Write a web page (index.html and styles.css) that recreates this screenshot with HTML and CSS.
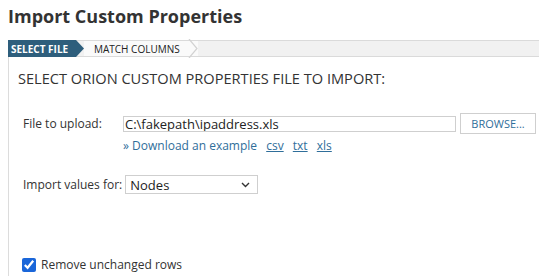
FILE: index.html
```html
<!DOCTYPE html>
<html lang="en">
<head>
    <meta charset="UTF-8">
    <meta name="viewport" content="width=device-width, initial-scale=1.0">
    <title>Import Custom Properties</title>
    <link rel="stylesheet" href="styles.css">
</head>
<body>
    <h1 class="page-title">Import Custom Properties</h1>

    <div class="steps">
        <div class="step step-active">SELECT FILE</div>
        <div class="step">
            MATCH COLUMNS
            <svg class="step-arrow" width="10" height="19" viewBox="0 0 10 19">
                <polyline points="1,0 9,9.5 1,19" fill="none" stroke="#d2d2d2" stroke-width="1.2"/>
            </svg>
        </div>
    </div>

    <div class="panel">
        <h2 class="panel-title">SELECT ORION CUSTOM PROPERTIES FILE TO IMPORT:</h2>

        <div class="form-row file-row">
            <label class="form-label">File to upload:</label>
            <div class="file-field">
                <div class="file-line">
                    <input class="file-input" type="text" value="C:\fakepath\ipaddress.xls">
                    <button class="browse-btn">BROWSE...</button>
                </div>
                <p class="examples">
                    &raquo; Download an example
                    <a href="#">csv</a>
                    <a href="#">txt</a>
                    <a href="#">xls</a>
                </p>
            </div>
        </div>

        <div class="form-row values-row">
            <label class="form-label-inline">Import values for:</label>
            <div class="select-box">
                <span>Nodes</span>
                <svg width="9" height="6" viewBox="0 0 9 6">
                    <polyline points="1,1 4.5,4.5 8,1" fill="none" stroke="#333" stroke-width="1.4"/>
                </svg>
            </div>
        </div>

        <label class="check-row">
            <input type="checkbox" checked>
            Remove unchanged rows
        </label>
    </div>
</body>
</html>
```

FILE: styles.css
```css
*{
    margin: 0;
    padding: 0;
    box-sizing: border-box;
}
body{
    font-family: "Open Sans", Arial, sans-serif;
    color: #333;
    background-color: white;
    padding: 0 0 0 8px;
    overflow: hidden;
}
.page-title{
    font-size: 18px;
    font-weight: bold;
    line-height: 25px;
    margin-top: 4px;
    color: #333;
}
.steps{
    display: flex;
    height: 17px;
    margin-top: 11px;
    background-color: #f1f1f1;
    border-top: 1px solid #dadada;
    border-bottom: 1px solid #dadada;
}
.step{
    display: flex;
    align-items: center;
    font-size: 10px;
    height: 15px;
    background-color: #fafafa;
    padding-left: 10px;
    color: #222;
}
.step-active{
    background-color: #2e5e7c;
    color: white;
    font-weight: bold;
    width: 76px;
    height: 17px;
    margin-top: -1px;
    padding-left: 3px;
    clip-path: polygon(0 0, 68px 0, 76px 50%, 68px 100%, 0 100%);
}
.step-arrow{
    margin-left: 8px;
    margin-top: -2px;
    margin-bottom: -2px;
}
.panel{
    border-left: 1px solid #dcdcdc;
    padding-left: 9px;
    height: 220px;
}
.panel-title{
    font-size: 14.6px;
    font-weight: normal;
    line-height: 20px;
    padding-top: 11px;
    color: #333;
}
.form-row{
    display: flex;
    margin-left: 5px;
    font-size: 12px;
}
.file-row{
    margin-top: 25px;
}
.form-label{
    width: 100px;
    line-height: 20px;
    padding-top: 1px;
}
.file-line{
    display: flex;
    align-items: center;
}
.file-input{
    width: 333px;
    height: 16px;
    border: 1px solid #cfcfcf;
    font-family: "Open Sans", Arial, sans-serif;
    font-size: 13px;
    color: #222;
    padding-left: 1px;
    outline: none;
}
.browse-btn{
    margin-left: 4px;
    width: 76px;
    height: 21px;
    background-color: white;
    border: 1px solid #cfcfcf;
    font-family: "Open Sans", Arial, sans-serif;
    font-size: 11px;
    color: #2f6e9a;
}
.examples{
    font-size: 12px;
    color: #2f6e9a;
    margin-top: 2px;
    line-height: 19px;
}
.examples a{
    color: #2f6e9a;
    margin-left: 6px;
}
.values-row{
    margin-top: 20px;
    align-items: center;
}
.form-label-inline{
    margin-right: 3px;
}
.select-box{
    display: flex;
    align-items: center;
    justify-content: space-between;
    width: 133px;
    height: 19px;
    border: 1px solid #cfcfcf;
    padding: 0 7px 0 4px;
    font-size: 13px;
    color: #222;
}
.check-row{
    display: flex;
    align-items: center;
    gap: 5px;
    margin-top: 62px;
    margin-left: 4px;
    font-size: 12px;
}
.check-row input{
    width: 14px;
    height: 14px;
    accent-color: #1a66d9;
}
```
